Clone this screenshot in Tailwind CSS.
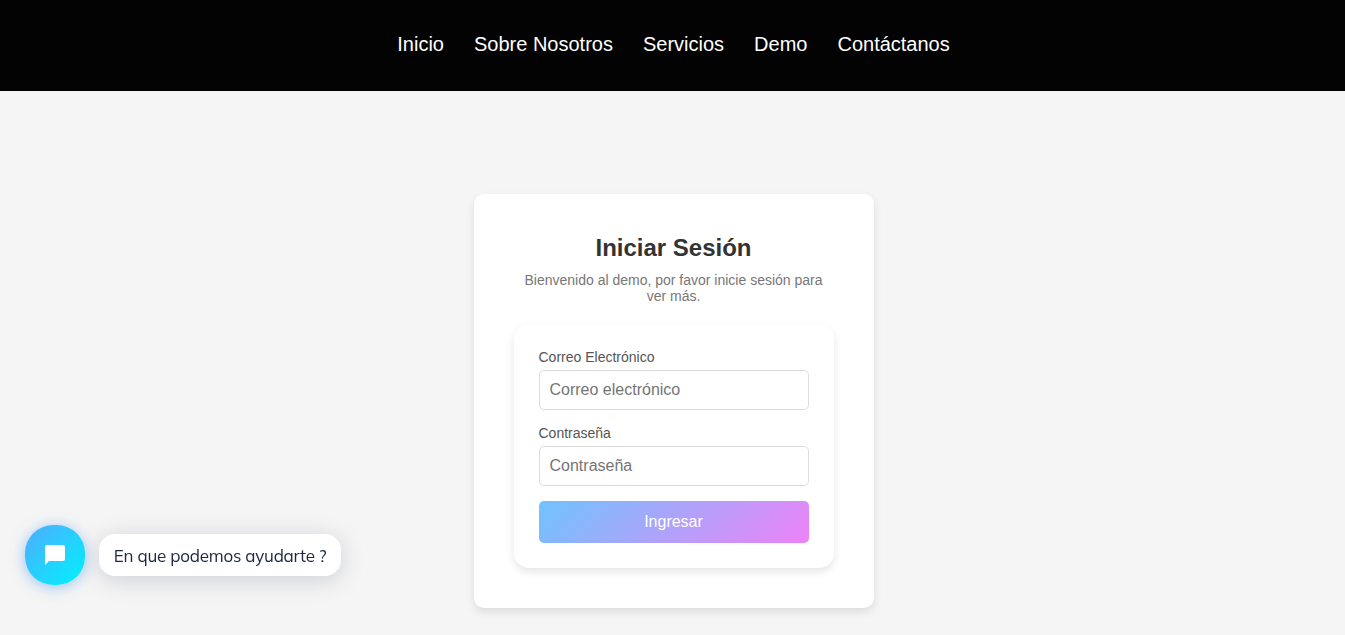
<!DOCTYPE html>
<html lang="es">
<head>
<meta charset="utf-8">
<title>Iniciar Sesión</title>
<script src="https://cdn.jsdelivr.net/npm/@tailwindcss/browser@4"></script>
</head>
<body class="h-[635px] overflow-hidden bg-[#f5f5f5] font-['Liberation_Sans',Arial,sans-serif]">
<header class="flex h-[91px] justify-center bg-[#030303] pt-[32px] pl-[2px]">
  <nav class="flex gap-[30px] text-[20px] leading-[24px] text-white">
    <a>Inicio</a><a>Sobre Nosotros</a><a>Servicios</a><a>Demo</a><a>Contáctanos</a>
  </nav>
</header>
<main class="flex justify-center pt-[103px] pl-[2px]">
  <section class="h-[414px] w-[400px] rounded-[10px] bg-white p-[40px] shadow-[0_4px_8px_rgba(0,0,0,0.1)]">
    <h1 class="text-center text-[24px] leading-[28px] font-bold text-[#333]">Iniciar Sesión</h1>
    <p class="mt-[10px] text-center text-[14px] leading-[16px] text-[#777]">Bienvenido al demo, por favor inicie sesión para ver más.</p>
    <form class="mt-[20px] h-[244px] rounded-[15px] bg-white p-[25px] shadow-[0_4px_8px_rgba(0,0,0,0.1)]">
      <label class="block text-[14px] leading-[16px] text-[#555]">Correo Electrónico</label>
      <input class="mt-[5px] block h-[40px] w-full rounded-[5px] border border-[#ddd] px-[10px] text-[16px] placeholder:text-[#757575]" placeholder="Correo electrónico">
      <label class="mt-[15px] block text-[14px] leading-[16px] text-[#555]">Contraseña</label>
      <input class="mt-[5px] block h-[40px] w-full rounded-[5px] border border-[#ddd] px-[10px] text-[16px] placeholder:text-[#757575]" placeholder="Contraseña">
      <button type="button" class="mt-[15px] block h-[42px] w-full rounded-[5px] bg-[linear-gradient(135deg,#6fc3fd,#ee82f8)] text-[16px] text-white">Ingresar</button>
    </form>
  </section>
</main>
<div class="fixed bottom-[50px] left-[25px] flex items-center gap-[14px]">
  <button class="flex size-[60px] items-center justify-center rounded-[28px] bg-[linear-gradient(135deg,#4facfe,#00f2fe)] shadow-[0_4px_24px_#02061008,0_2px_14px_#4fa0fe80]">
    <svg width="24" height="24" viewBox="0 0 24 24" fill="#fff"><path d="M20 2H4c-1.100 0-2 .9-2 2v18l4-4h14c1.100 0 2-.9 2-2V4c0-1.100-.9-2-2-2z"/></svg>
  </button>
  <div class="h-[42px] w-[242px] rounded-[16px] bg-white text-center font-[Mulish,Lato,sans-serif] text-[17px] leading-[44px] tracking-[-0.22px] whitespace-nowrap text-[#1b2740] shadow-[0_4px_24px_#0a1a3a2b]">En que podemos ayudarte ?</div>
</div>
</body>
</html>
